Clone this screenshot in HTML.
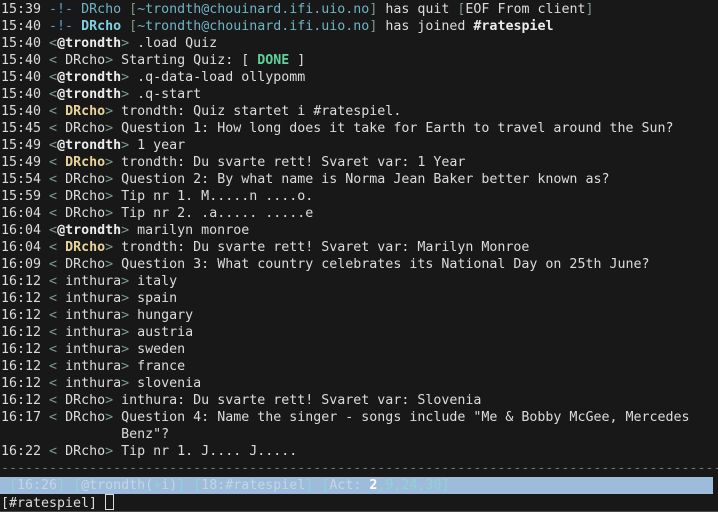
<!DOCTYPE html>
<html><head><meta charset="utf-8"><style>
html,body{margin:0;padding:0;background:#181818;width:718px;height:512px;overflow:hidden}
pre{margin:0;padding:1px 0 0 1px;font-family:"DejaVu Sans Mono","Liberation Mono",monospace;font-size:13.3px;line-height:17px;color:#dcdcdc;white-space:pre}
.g{color:#7f9a8c}.b{color:#5a9fd4}.c{color:#6fb3c4}.cb{color:#7fd0e0;font-weight:bold}
.w{font-weight:bold;color:#ececec}.y{color:#e8d49a;font-weight:bold}.d{color:#5fd09a;font-weight:bold}
.st{position:absolute;left:0;top:477px;height:17px;line-height:17px;background:#9dbcdb;width:713px;color:#c4d6e2;font-family:"DejaVu Sans Mono","Liberation Mono",monospace;font-size:13.3px;white-space:pre;padding-left:1px;box-sizing:border-box}
.sb{color:#8fd3d3}.two{color:#fff;font-weight:bold}
.in{position:absolute;left:1px;top:494px;line-height:17px;color:#dcdcdc;font-family:"DejaVu Sans Mono","Liberation Mono",monospace;font-size:13.3px;white-space:pre}
.cur{display:inline-block;width:7px;height:14px;border:1px solid #ddd;vertical-align:-3px}
.dash{color:#6a7a72}
.bl{position:absolute;left:0;top:511px;width:718px;height:1px;background:#4a4a4a}
</style></head><body>
<pre>15:39 <span class="b">-!-</span> <span class="c">DRcho</span> <span class="g">[</span><span class="c">~trondth@chouinard.ifi.uio.no</span><span class="g">]</span> has quit <span class="g">[</span>EOF From client<span class="g">]</span>
15:40 <span class="b">-!-</span> <span class="cb">DRcho</span> <span class="g">[</span><span class="c">~trondth@chouinard.ifi.uio.no</span><span class="g">]</span> has joined <span class="w">#ratespiel</span>
15:40 <span class="g">&lt;</span><span class="w">@trondth</span><span class="g">&gt;</span> .load Quiz
15:40 <span class="g">&lt;</span> DRcho<span class="g">&gt;</span> Starting Quiz: [ <span class="d">DONE</span> ]
15:40 <span class="g">&lt;</span><span class="w">@trondth</span><span class="g">&gt;</span> .q-data-load ollypomm
15:40 <span class="g">&lt;</span><span class="w">@trondth</span><span class="g">&gt;</span> .q-start
15:40 <span class="g">&lt;</span> <span class="y">DRcho</span><span class="g">&gt;</span> trondth: Quiz startet i #ratespiel.
15:45 <span class="g">&lt;</span> DRcho<span class="g">&gt;</span> Question 1: How long does it take for Earth to travel around the Sun?
15:49 <span class="g">&lt;</span><span class="w">@trondth</span><span class="g">&gt;</span> 1 year
15:49 <span class="g">&lt;</span> <span class="y">DRcho</span><span class="g">&gt;</span> trondth: Du svarte rett! Svaret var: 1 Year
15:54 <span class="g">&lt;</span> DRcho<span class="g">&gt;</span> Question 2: By what name is Norma Jean Baker better known as?
15:59 <span class="g">&lt;</span> DRcho<span class="g">&gt;</span> Tip nr 1. M.....n ....o.
16:04 <span class="g">&lt;</span> DRcho<span class="g">&gt;</span> Tip nr 2. .a..... .....e
16:04 <span class="g">&lt;</span><span class="w">@trondth</span><span class="g">&gt;</span> marilyn monroe
16:04 <span class="g">&lt;</span> <span class="y">DRcho</span><span class="g">&gt;</span> trondth: Du svarte rett! Svaret var: Marilyn Monroe
16:09 <span class="g">&lt;</span> DRcho<span class="g">&gt;</span> Question 3: What country celebrates its National Day on 25th June?
16:12 <span class="g">&lt;</span> inthura<span class="g">&gt;</span> italy
16:12 <span class="g">&lt;</span> inthura<span class="g">&gt;</span> spain
16:12 <span class="g">&lt;</span> inthura<span class="g">&gt;</span> hungary
16:12 <span class="g">&lt;</span> inthura<span class="g">&gt;</span> austria
16:12 <span class="g">&lt;</span> inthura<span class="g">&gt;</span> sweden
16:12 <span class="g">&lt;</span> inthura<span class="g">&gt;</span> france
16:12 <span class="g">&lt;</span> inthura<span class="g">&gt;</span> slovenia
16:12 <span class="g">&lt;</span> DRcho<span class="g">&gt;</span> inthura: Du svarte rett! Svaret var: Slovenia
16:17 <span class="g">&lt;</span> DRcho<span class="g">&gt;</span> Question 4: Name the singer - songs include "Me &amp; Bobby McGee, Mercedes
               Benz"?
16:22 <span class="g">&lt;</span> DRcho<span class="g">&gt;</span> Tip nr 1. J.... J.....
<span class="dash">------------------------------------------------------------------------------------------</span></pre>
<div class="st"> <span class="sb">[</span>16:26<span class="sb">]</span> <span class="sb">[</span>@trondth(<span class="sb">+</span>i)<span class="sb">]</span> <span class="sb">[</span>18:#ratespiel<span class="sb">]</span> <span class="sb">[</span>Act: <span class="two">2</span><span class="sb">,9,24,30]</span></div>
<div class="in">[#ratespiel] <span class="cur"></span></div>
<div class="bl"></div>
</body></html>
